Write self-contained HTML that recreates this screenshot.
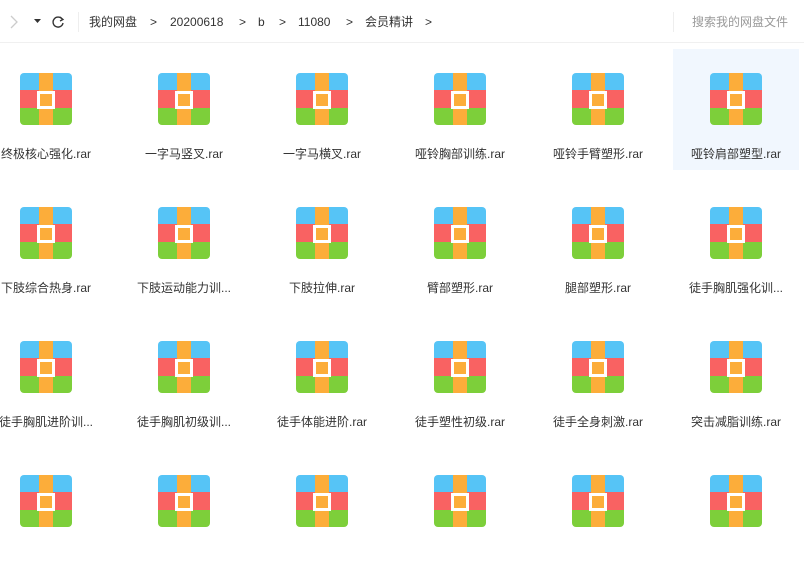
<!DOCTYPE html>
<html><head><meta charset="utf-8"><style>
*{margin:0;padding:0;box-sizing:border-box}
body{width:804px;height:533px;overflow:hidden;background:#fff;font-family:"Liberation Sans","Noto Sans CJK SC",sans-serif;position:relative;color:#333}
.hdr{position:absolute;left:0;top:0;width:804px;height:43px;border-bottom:1px solid #f0f0f0;font-size:12px}
.hdr span{position:absolute;top:14px;line-height:16px}
.cell{position:absolute;width:126px;height:121px}
.ic{position:absolute;left:37px;top:24px;width:52px;height:52px;border-radius:4px;overflow:hidden}
.ic .b{position:absolute;left:0;top:0;width:52px;height:17px;background:#56c4f6}
.ic .r{position:absolute;left:0;top:17px;width:52px;height:18px;background:#f96262}
.ic .g{position:absolute;left:0;top:35px;width:52px;height:17px;background:#7dcf3a}
.ic .o{position:absolute;left:19px;top:0;width:14px;height:52px;background:#fcad3a}
.ic .w{position:absolute;left:17px;top:18px;width:18px;height:18px;border:3px solid #fff;background:#fcad3a}
.lb{position:absolute;left:-23px;width:172px;top:96px;text-align:center;font-size:12px;color:#333;white-space:nowrap}
.sel{background:#f1f7fe}
</style></head><body>
<div class="hdr">
<svg style="position:absolute;left:9px;top:15px" width="10" height="14"><path d="M2 1l6 6-6 6" fill="none" stroke="#ccc" stroke-width="1.3"/></svg>
<svg style="position:absolute;left:34px;top:19px" width="7" height="5"><path d="M0 0h7L3.5 4z" fill="#333"/></svg>
<svg style="position:absolute;left:51px;top:15px" width="14" height="14"><path d="M11 4A5 5 0 1 0 12 8" fill="none" stroke="#333" stroke-width="1.4"/><path d="M9 2l3 2.5-3 1.5" fill="none" stroke="#333" stroke-width="1.3"/></svg>
<div style="position:absolute;left:78px;top:12px;width:1px;height:20px;background:#eee"></div>
<span style="left:89px">我的网盘</span><span style="left:150px">&gt;</span>
<span style="left:170px">20200618</span><span style="left:239px">&gt;</span>
<span style="left:258px">b</span><span style="left:279px">&gt;</span>
<span style="left:298px">11080</span><span style="left:346px">&gt;</span>
<span style="left:365px">会员精讲</span><span style="left:425px">&gt;</span>
<div style="position:absolute;left:673px;top:12px;width:1px;height:20px;background:#eee"></div>
<span style="left:692px;color:#999">搜索我的网盘文件</span>
</div>
<div id="g"></div>
<script>
var n=["终极核心强化.rar","一字马竖叉.rar","一字马横叉.rar","哑铃胸部训练.rar","哑铃手臂塑形.rar","哑铃肩部塑型.rar","下肢综合热身.rar","下肢运动能力训...","下肢拉伸.rar","臂部塑形.rar","腿部塑形.rar","徒手胸肌强化训...","徒手胸肌进阶训...","徒手胸肌初级训...","徒手体能进阶.rar","徒手塑性初级.rar","徒手全身刺激.rar","突击减脂训练.rar","","","","","",""];
var h="";for(var i=0;i<24;i++){var c=i%6,r=Math.floor(i/6);
h+='<div class="cell'+(i==5?' sel':'')+'" style="left:'+(c*138-17)+'px;top:'+(49+r*134)+'px"><div class="ic"><div class="b"></div><div class="r"></div><div class="g"></div><div class="o"></div><div class="w"></div></div><div class="lb">'+n[i]+'</div></div>';}
document.getElementById("g").innerHTML=h;
</script>
</body></html>
